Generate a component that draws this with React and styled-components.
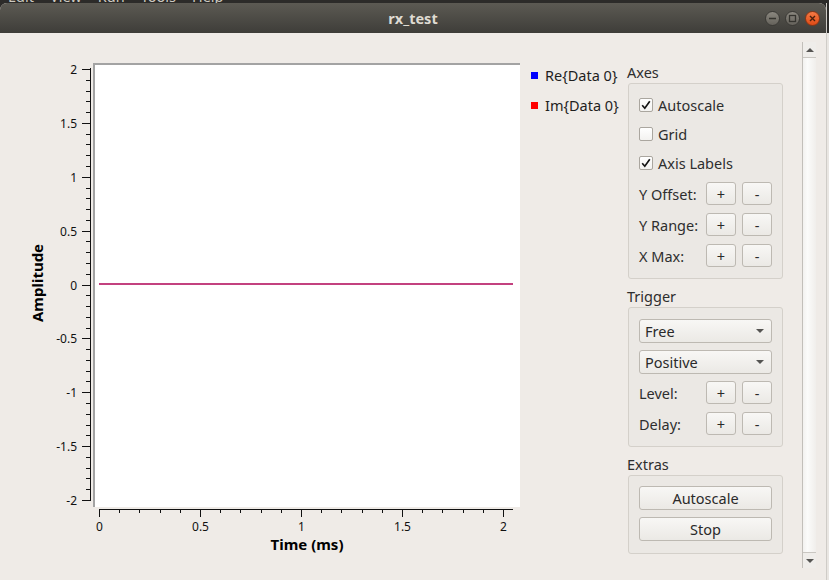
import styled, { createGlobalStyle } from "styled-components";

const Global = createGlobalStyle`
  html, body {
    margin: 0;
    padding: 0;
  }
  body {
    background: #2c2b29;
    font-family: "Noto Sans", "DejaVu Sans", sans-serif;
  }
`;

const Screen = styled.div`
  width: 829px;
  height: 580px;
  overflow: hidden;
  display: flex;
  flex-direction: column;
  background: #2c2b29;
`;
const MenuStrip = styled.div`
  height: 3px;
  overflow: hidden;
  display: flex;
  gap: 16px;
  padding-left: 8px;
  span {
    margin-top: -11px;
    line-height: 14px;
    font-size: 14.5px;
    color: #cdc9c0;
  }
`;
const Row = styled.div`
  flex: 1;
  display: flex;
  min-height: 0;
`;
const Window = styled.div`
  width: 826px;
  display: flex;
  flex-direction: column;
  border-radius: 7px 7px 0 0;
  overflow: hidden;
  background: #efebe7;
`;
const OuterStrip = styled.div`
  width: 3px;
  background: linear-gradient(to bottom, #2c2b29 30px, #e9e6e2 30px);
  border-left: 1px solid #cfccc7;
  box-sizing: border-box;
`;
const TitleBar = styled.div`
  height: 30px;
  flex-shrink: 0;
  display: grid;
  grid-template-columns: 1fr auto 1fr;
  align-items: center;
  background: linear-gradient(#5c5a53, #3e3d39);
`;
const Title = styled.div`
  grid-column: 2;
  color: #dfdbd2;
  font-size: 14.5px;
  font-weight: 700;
`;
const WinButtons = styled.div`
  justify-self: end;
  display: flex;
  gap: 5px;
  padding-right: 6px;
`;
const WinButton = styled.div`
  width: 15px;
  height: 15px;
  border-radius: 50%;
  box-sizing: border-box;
  display: flex;
  align-items: center;
  justify-content: center;
  border: 1px solid ${(p) => (p.$close ? "#8a3514" : "#3a3935")};
  background: ${(p) =>
    p.$close
      ? "linear-gradient(#f47a45, #df4b16)"
      : "linear-gradient(#8a877f, #65625b)"};
`;
const Body = styled.div`
  flex: 1;
  display: flex;
  align-items: flex-start;
`;
const Plot = styled.svg`
  display: block;
  flex-shrink: 0;
  font-family: "Noto Sans", "DejaVu Sans", sans-serif;
`;
const Legend = styled.div`
  width: 96px;
  margin-left: 3px;
  padding-top: 27px;
  display: flex;
  flex-direction: column;
`;
const LegendItem = styled.div`
  height: 30px;
  display: flex;
  align-items: center;
  gap: 7px;
  font-size: 14.5px;
  color: #1e1e1e;
`;
const Swatch = styled.span`
  width: 7px;
  height: 7px;
  background: ${(p) => p.$color};
`;
const Panel = styled.div`
  width: 156px;
  padding-top: 29px;
  display: flex;
  flex-direction: column;
  color: #2e2e2e;
  font-size: 14.5px;
`;
const SectionTitle = styled.div`
  line-height: 20px;
  margin-bottom: 1px;
  margin-top: ${(p) => (p.$first ? "0" : "7px")};
`;
const Group = styled.div`
  margin-left: 1px;
  border: 1px solid #d4d0ca;
  border-radius: 3px;
  background: #ebe8e4;
  padding: ${(p) => p.$pad || "6px 10px 7px 10px"};
  display: flex;
  flex-direction: column;
`;
const CheckRow = styled.div`
  height: 29px;
  display: flex;
  align-items: center;
  gap: 5px;
`;
const Box = styled.span`
  width: 14px;
  height: 14px;
  box-sizing: border-box;
  border: 1px solid #aaa69f;
  border-radius: 2px;
  background: linear-gradient(#ffffff, #f3f2f0);
  display: flex;
  align-items: center;
  justify-content: center;
`;
const StepRow = styled.div`
  height: 31px;
  display: grid;
  grid-template-columns: 61px 30px 30px;
  column-gap: 6px;
  align-items: center;
  margin-top: ${(p) => (p.$gap ? "1px" : "0")};
`;
const Button = styled.div`
  height: ${(p) => p.$h || 23}px;
  box-sizing: border-box;
  border: 1px solid #bdb9b2;
  border-radius: 3px;
  background: linear-gradient(#f8f7f5, #ebe9e5);
  display: flex;
  align-items: center;
  justify-content: center;
  color: #2a2a2a;
  font-size: 14.5px;
`;
const WideRow = styled.div`
  height: 31px;
  display: flex;
  align-items: center;
`;
const WideButton = styled(Button)`
  width: 133px;
  height: 24px;
`;
const Combo = styled(Button)`
  width: 133px;
  height: 24px;
  justify-content: space-between;
  padding: 0 7px 0 5px;
`;
const Arrow = styled.span`
  width: 0;
  height: 0;
  border-left: 4px solid transparent;
  border-right: 4px solid transparent;
  border-${(p) => (p.$up ? "bottom" : "top")}: 4px solid #555452;
`;
const Scrollbar = styled.div`
  width: 14px;
  height: 526px;
  margin-left: 19px;
  margin-top: 9px;
  box-sizing: border-box;
  border-left: 1px solid #c2bfba;
  display: flex;
  flex-direction: column;
  background: linear-gradient(to right, #f2f1ef, #fbfbfa 35%, #f0eeeb);
`;
const ScrollArrow = styled.div`
  height: 15px;
  display: flex;
  align-items: center;
  justify-content: center;
  background: #efedea;
  border-${(p) => (p.$up ? "bottom" : "top")}: 1px solid #c9c6c1;
`;
const Trough = styled.div`
  flex: 1;
`;

const yPos = (v) => 284.5 - v * 107.75;
const xPos = (v) => 99 + v * 202;
const fmt = (v) => String(Math.round(v * 10) / 10);

const PlotArea = () => {
  const yTicks = [];
  for (let i = -20; i <= 20; i++) yTicks.push(i);
  const xTicks = [];
  for (let i = 0; i <= 20; i++) xTicks.push(i);
  return (
    <Plot width="528" height="547" viewBox="0 33 528 547">
      <rect x="93" y="63" width="427" height="444" fill="#ffffff" />
      <line x1="94" y1="63" x2="94" y2="507" stroke="#a3a3a3" strokeWidth="2" />
      <line x1="93" y1="64" x2="520" y2="64" stroke="#a3a3a3" strokeWidth="2" />
      <line x1="99" y1="284" x2="513" y2="284" stroke="#c3417f" strokeWidth="2" />

      <line x1="90.5" y1="68" x2="90.5" y2="501" stroke="#111" />
      {yTicks.map((i) => {
        const y = Math.round(yPos(i / 10)) + 0.5;
        const major = i % 5 === 0;
        return (
          <g key={"y" + i}>
            <line x1={major ? 82 : 86} y1={y} x2="90" y2={y} stroke="#111" />
            {major && (
              <text x="77" y={y + 4} fontSize="12" textAnchor="end" fill="#111">
                {fmt(i / 10)}
              </text>
            )}
          </g>
        );
      })}

      <line x1="99" y1="509.5" x2="513" y2="509.5" stroke="#111" />
      {xTicks.map((i) => {
        const x = Math.round(xPos(i / 10)) + 0.5;
        const major = i % 5 === 0;
        return (
          <g key={"x" + i}>
            <line x1={x} y1="509" x2={x} y2={major ? 517 : 513} stroke="#111" />
            {major && (
              <text x={x} y="531" fontSize="12" textAnchor="middle" fill="#111">
                {fmt(i / 10)}
              </text>
            )}
          </g>
        );
      })}

      <text
        transform="translate(43,283) rotate(-90)"
        fontSize="15"
        fontWeight="700"
        textAnchor="middle"
        fill="#000"
      >
        Amplitude
      </text>
      <text x="307" y="550" fontSize="15" fontWeight="700" textAnchor="middle" fill="#000">
        Time (ms)
      </text>
    </Plot>
  );
};

const Check = ({ on }) => (
  <Box>
    {on && (
      <svg width="12" height="12" viewBox="0 0 12 12">
        <path d="M2.2 6.2 L4.8 9.2 L9.8 2.2" fill="none" stroke="#151515" strokeWidth="1.7" />
      </svg>
    )}
  </Box>
);

const Step = ({ label, gap }) => (
  <StepRow $gap={gap}>
    <span>{label}</span>
    <Button>+</Button>
    <Button>-</Button>
  </StepRow>
);

const App = () => {
  return (
    <Screen>
      <Global />
      <MenuStrip>
        <span>Edit</span>
        <span>View</span>
        <span>Run</span>
        <span>Tools</span>
        <span>Help</span>
      </MenuStrip>
      <Row>
        <Window>
          <TitleBar>
            <Title>rx_test</Title>
            <WinButtons>
              <WinButton>
                <svg width="9" height="9" viewBox="0 0 9 9">
                  <line x1="1" y1="4.5" x2="8" y2="4.5" stroke="#35342f" strokeWidth="1.4" />
                </svg>
              </WinButton>
              <WinButton>
                <svg width="9" height="9" viewBox="0 0 9 9">
                  <rect x="1.5" y="1.5" width="6" height="6" fill="none" stroke="#35342f" strokeWidth="1.3" />
                </svg>
              </WinButton>
              <WinButton $close>
                <svg width="9" height="9" viewBox="0 0 9 9">
                  <path d="M2 2 L7 7 M7 2 L2 7" stroke="#4a200c" strokeWidth="1.4" />
                </svg>
              </WinButton>
            </WinButtons>
          </TitleBar>
          <Body>
            <PlotArea />
            <Legend>
              <LegendItem>
                <Swatch $color="#0000ff" />
                Re{"{"}Data 0{"}"}
              </LegendItem>
              <LegendItem>
                <Swatch $color="#ff0000" />
                Im{"{"}Data 0{"}"}
              </LegendItem>
            </Legend>
            <Panel>
              <SectionTitle $first>Axes</SectionTitle>
              <Group>
                <CheckRow>
                  <Check on />
                  Autoscale
                </CheckRow>
                <CheckRow>
                  <Check />
                  Grid
                </CheckRow>
                <CheckRow>
                  <Check on />
                  Axis Labels
                </CheckRow>
                <Step label="Y Offset:" gap />
                <Step label="Y Range:" />
                <Step label="X Max:" />
              </Group>

              <SectionTitle>Trigger</SectionTitle>
              <Group $pad="7px 10px 7px 10px">
                <WideRow>
                  <Combo>
                    Free
                    <Arrow />
                  </Combo>
                </WideRow>
                <WideRow>
                  <Combo>
                    Positive
                    <Arrow />
                  </Combo>
                </WideRow>
                <Step label="Level:" />
                <Step label="Delay:" />
              </Group>

              <SectionTitle>Extras</SectionTitle>
              <Group $pad="6px 10px 9px 10px">
                <WideRow>
                  <WideButton>Autoscale</WideButton>
                </WideRow>
                <WideRow>
                  <WideButton>Stop</WideButton>
                </WideRow>
              </Group>
            </Panel>
            <Scrollbar>
              <ScrollArrow $up>
                <Arrow $up />
              </ScrollArrow>
              <Trough />
              <ScrollArrow>
                <Arrow />
              </ScrollArrow>
            </Scrollbar>
          </Body>
        </Window>
        <OuterStrip />
      </Row>
    </Screen>
  );
};

export default App;
